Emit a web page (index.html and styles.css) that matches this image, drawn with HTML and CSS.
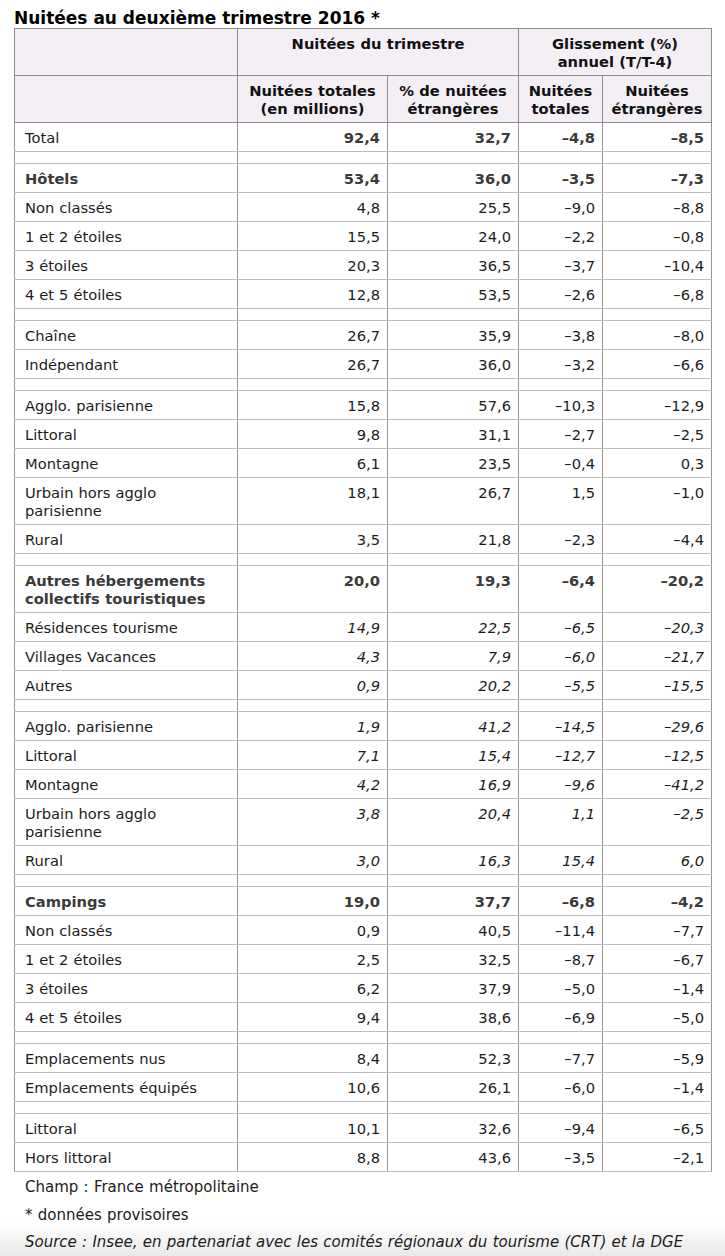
FILE: index.html
```html
<!DOCTYPE html>
<html lang="fr">
<head>
<meta charset="utf-8">
<title>Nuitées au deuxième trimestre 2016</title>
<link rel="stylesheet" href="styles.css">
</head>
<body>
<div class="page">
  <h1 class="title">Nuitées au deuxième trimestre 2016 *</h1>
  <table class="data">
    <colgroup>
      <col class="c-label"><col class="c-tot"><col class="c-etr"><col class="c-g1"><col class="c-g2">
    </colgroup>
    <thead>
      <tr>
        <th></th>
        <th colspan="2">Nuitées du trimestre</th>
        <th colspan="2">Glissement (%)<br>annuel (T/T-4)</th>
      </tr>
      <tr>
        <th></th>
        <th>Nuitées totales<br>(en millions)</th>
        <th>% de nuitées<br>étrangères</th>
        <th>Nuitées<br>totales</th>
        <th>Nuitées<br>étrangères</th>
      </tr>
    </thead>
    <tbody>
      <tr class="numbold"><td>Total</td><td>92,4</td><td>32,7</td><td>–4,8</td><td>–8,5</td></tr>
      <tr class="sp"><td></td><td></td><td></td><td></td><td></td></tr>
      <tr class="bold"><td>Hôtels</td><td>53,4</td><td>36,0</td><td>–3,5</td><td>–7,3</td></tr>
      <tr><td>Non classés</td><td>4,8</td><td>25,5</td><td>–9,0</td><td>–8,8</td></tr>
      <tr><td>1 et 2 étoiles</td><td>15,5</td><td>24,0</td><td>–2,2</td><td>–0,8</td></tr>
      <tr><td>3 étoiles</td><td>20,3</td><td>36,5</td><td>–3,7</td><td>–10,4</td></tr>
      <tr><td>4 et 5 étoiles</td><td>12,8</td><td>53,5</td><td>–2,6</td><td>–6,8</td></tr>
      <tr class="sp"><td></td><td></td><td></td><td></td><td></td></tr>
      <tr><td>Chaîne</td><td>26,7</td><td>35,9</td><td>–3,8</td><td>–8,0</td></tr>
      <tr><td>Indépendant</td><td>26,7</td><td>36,0</td><td>–3,2</td><td>–6,6</td></tr>
      <tr class="sp"><td></td><td></td><td></td><td></td><td></td></tr>
      <tr><td>Agglo. parisienne</td><td>15,8</td><td>57,6</td><td>–10,3</td><td>–12,9</td></tr>
      <tr><td>Littoral</td><td>9,8</td><td>31,1</td><td>–2,7</td><td>–2,5</td></tr>
      <tr><td>Montagne</td><td>6,1</td><td>23,5</td><td>–0,4</td><td>0,3</td></tr>
      <tr><td>Urbain hors agglo<br>parisienne</td><td>18,1</td><td>26,7</td><td>1,5</td><td>–1,0</td></tr>
      <tr><td>Rural</td><td>3,5</td><td>21,8</td><td>–2,3</td><td>–4,4</td></tr>
      <tr class="sp"><td></td><td></td><td></td><td></td><td></td></tr>
      <tr class="bold"><td>Autres hébergements<br>collectifs touristiques</td><td>20,0</td><td>19,3</td><td>–6,4</td><td>–20,2</td></tr>
      <tr class="it"><td>Résidences tourisme</td><td>14,9</td><td>22,5</td><td>–6,5</td><td>–20,3</td></tr>
      <tr class="it"><td>Villages Vacances</td><td>4,3</td><td>7,9</td><td>–6,0</td><td>–21,7</td></tr>
      <tr class="it"><td>Autres</td><td>0,9</td><td>20,2</td><td>–5,5</td><td>–15,5</td></tr>
      <tr class="sp"><td></td><td></td><td></td><td></td><td></td></tr>
      <tr class="it"><td>Agglo. parisienne</td><td>1,9</td><td>41,2</td><td>–14,5</td><td>–29,6</td></tr>
      <tr class="it"><td>Littoral</td><td>7,1</td><td>15,4</td><td>–12,7</td><td>–12,5</td></tr>
      <tr class="it"><td>Montagne</td><td>4,2</td><td>16,9</td><td>–9,6</td><td>–41,2</td></tr>
      <tr class="it"><td>Urbain hors agglo<br>parisienne</td><td>3,8</td><td>20,4</td><td>1,1</td><td>–2,5</td></tr>
      <tr class="it"><td>Rural</td><td>3,0</td><td>16,3</td><td>15,4</td><td>6,0</td></tr>
      <tr class="sp"><td></td><td></td><td></td><td></td><td></td></tr>
      <tr class="bold"><td>Campings</td><td>19,0</td><td>37,7</td><td>–6,8</td><td>–4,2</td></tr>
      <tr><td>Non classés</td><td>0,9</td><td>40,5</td><td>–11,4</td><td>–7,7</td></tr>
      <tr><td>1 et 2 étoiles</td><td>2,5</td><td>32,5</td><td>–8,7</td><td>–6,7</td></tr>
      <tr><td>3 étoiles</td><td>6,2</td><td>37,9</td><td>–5,0</td><td>–1,4</td></tr>
      <tr><td>4 et 5 étoiles</td><td>9,4</td><td>38,6</td><td>–6,9</td><td>–5,0</td></tr>
      <tr class="sp"><td></td><td></td><td></td><td></td><td></td></tr>
      <tr><td>Emplacements nus</td><td>8,4</td><td>52,3</td><td>–7,7</td><td>–5,9</td></tr>
      <tr><td>Emplacements équipés</td><td>10,6</td><td>26,1</td><td>–6,0</td><td>–1,4</td></tr>
      <tr class="sp"><td></td><td></td><td></td><td></td><td></td></tr>
      <tr><td>Littoral</td><td>10,1</td><td>32,6</td><td>–9,4</td><td>–6,5</td></tr>
      <tr><td>Hors littoral</td><td>8,8</td><td>43,6</td><td>–3,5</td><td>–2,1</td></tr>
    </tbody>
  </table>
  <div class="notes">
    <p class="note">Champ : France métropolitaine</p>
    <p class="note">* données provisoires</p>
    <p class="note source">Source : Insee, en partenariat avec les comités régionaux du tourisme (CRT) et la DGE</p>
  </div>
</div>
</body>
</html>
```

FILE: styles.css
```css
html {
  background: linear-gradient(to bottom, #ffffff 0, #ffffff 1222px, #e9e9e9 1256px);
  min-height: 1256px;
}
body {
  margin: 0;
  font-family: "DejaVu Sans", Verdana, sans-serif;
  color: #1c1c1c;
}
.page {
  padding: 8px 0 0 14px;
}
.title {
  margin: 0;
  font-size: 17px;
  line-height: 20px;
  font-weight: bold;
  color: #000;
}
.data {
  border-collapse: collapse;
  table-layout: fixed;
  width: 697px;
  font-size: 14.7px;
  line-height: 18px;
  word-spacing: 0.3px;
  border: 1px solid #888;
}
.c-label { width: 223px; }
.c-tot { width: 150px; }
.c-etr { width: 131px; }
.c-g1 { width: 84px; }
.c-g2 { width: 109px; }
.data th {
  background: #f4eef5;
  border: 1px solid #8c8c8c;
  font-weight: bold;
  color: #111;
  text-align: center;
  vertical-align: top;
  padding: 6px 4px 4px;
}
.data td {
  border-top: 1px solid #bdbdbd;
  border-bottom: 1px solid #bdbdbd;
  border-left: 1px solid #959595;
  border-right: 1px solid #959595;
  padding: 6px 7px 4px 10px;
  vertical-align: top;
  text-align: right;
}
.data td:first-child {
  text-align: left;
}
.data tr.sp td {
  padding: 0;
  height: 11px;
}
.data tr.bold td,
.data tr.numbold td + td {
  font-weight: bold;
  color: #3a3a3a;
}
.data tr.it td + td {
  font-style: italic;
}
.notes {
  padding: 2px 0 0 11px;
}
.note {
  margin: 0;
  font-size: 15px;
  line-height: 27.5px;
  word-spacing: 0.5px;
}
.source {
  font-style: italic;
}
```
